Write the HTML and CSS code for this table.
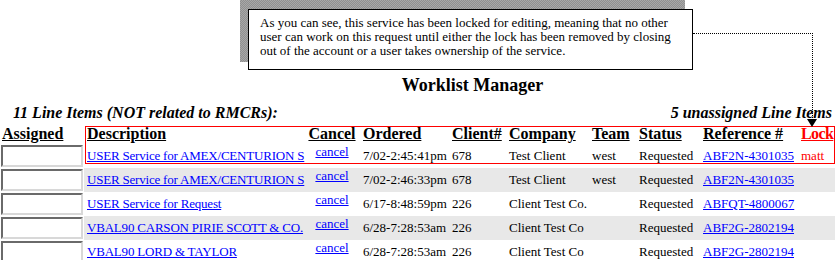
FILE: index.html
```html
<!DOCTYPE html>
<html>
<head>
    <meta charset="UTF-8">
    <title>Worklist Manager</title>
    <link rel="stylesheet" href="styles.css">
</head>
<body>
    <div class="page">
        <div class="note-shadow"></div>
        <div class="note">
            As you can see, this service has been locked for editing, meaning that no other<br>
            user can work on this request until either the lock has been removed by closing<br>
            out of the account or a user takes ownership of the service.
        </div>
        <div class="note-leader"></div>
        <div class="note-arrow"></div>

        <h1 class="title">Worklist Manager</h1>

        <div class="counts">
            <span>11 Line Items (NOT related to RMCRs):</span>
            <span>5 unassigned Line Items</span>
        </div>

        <div class="worklist-wrap">
            <table class="worklist">
                <colgroup>
                    <col class="c-assigned">
                    <col class="c-desc">
                    <col class="c-cancel">
                    <col class="c-ordered">
                    <col class="c-client">
                    <col class="c-company">
                    <col class="c-team">
                    <col class="c-status">
                    <col class="c-ref">
                    <col class="c-lock">
                </colgroup>
                <thead>
                    <tr>
                        <th class="assigned">Assigned</th>
                        <th>Description</th>
                        <th class="cancel">Cancel</th>
                        <th>Ordered</th>
                        <th>Client#</th>
                        <th>Company</th>
                        <th>Team</th>
                        <th>Status</th>
                        <th>Reference #</th>
                        <th class="lock">Lock</th>
                    </tr>
                </thead>
                <tbody>
                    <tr>
                        <td class="assigned"><input type="text"></td>
                        <td class="desc"><a href="#">USER Service for AMEX/CENTURION S</a></td>
                        <td class="cancel"><a href="#">cancel</a></td>
                        <td>7/02-2:45:41pm</td>
                        <td>678</td>
                        <td>Test Client</td>
                        <td>west</td>
                        <td>Requested</td>
                        <td><a href="#">ABF2N-4301035</a></td>
                        <td class="lock">matt</td>
                    </tr>
                    <tr class="alt">
                        <td class="assigned"><input type="text"></td>
                        <td class="desc"><a href="#">USER Service for AMEX/CENTURION S</a></td>
                        <td class="cancel"><a href="#">cancel</a></td>
                        <td>7/02-2:46:33pm</td>
                        <td>678</td>
                        <td>Test Client</td>
                        <td>west</td>
                        <td>Requested</td>
                        <td><a href="#">ABF2N-4301035</a></td>
                        <td class="lock"></td>
                    </tr>
                    <tr>
                        <td class="assigned"><input type="text"></td>
                        <td class="desc"><a href="#">USER Service for Request</a></td>
                        <td class="cancel"><a href="#">cancel</a></td>
                        <td>6/17-8:48:59pm</td>
                        <td>226</td>
                        <td>Client Test Co.</td>
                        <td></td>
                        <td>Requested</td>
                        <td><a href="#">ABFQT-4800067</a></td>
                        <td class="lock"></td>
                    </tr>
                    <tr class="alt">
                        <td class="assigned"><input type="text"></td>
                        <td class="desc"><a href="#">VBAL90 CARSON PIRIE SCOTT &amp; CO.</a></td>
                        <td class="cancel"><a href="#">cancel</a></td>
                        <td>6/28-7:28:53am</td>
                        <td>226</td>
                        <td>Client Test Co</td>
                        <td></td>
                        <td>Requested</td>
                        <td><a href="#">ABF2G-2802194</a></td>
                        <td class="lock"></td>
                    </tr>
                    <tr>
                        <td class="assigned"><input type="text"></td>
                        <td class="desc"><a href="#">VBAL90 LORD &amp; TAYLOR</a></td>
                        <td class="cancel"><a href="#">cancel</a></td>
                        <td>6/28-7:28:53am</td>
                        <td>226</td>
                        <td>Client Test Co</td>
                        <td></td>
                        <td>Requested</td>
                        <td><a href="#">ABF2G-2802194</a></td>
                        <td class="lock"></td>
                    </tr>
                </tbody>
            </table>
            <div class="lock-highlight"></div>
        </div>
    </div>
</body>
</html>
```

FILE: styles.css
```css
* {
    margin: 0;
    padding: 0;
    box-sizing: border-box;
}

body {
    background: #fff;
    color: #000;
    font-family: "Liberation Serif", "Times New Roman", serif;
}

.page {
    position: relative;
    width: 839px;
    height: 260px;
    overflow: hidden;
    padding-top: 74px;
}

/* callout note over the page */
.note-shadow {
    position: absolute;
    left: 240px;
    top: 0;
    width: 445px;
    height: 62px;
    background: repeating-conic-gradient(#909090 0 25%, #a8a8a8 0 50%) 0 0 / 2px 2px;
}

.note {
    position: absolute;
    left: 248px;
    top: 9px;
    width: 445px;
    height: 61px;
    padding: 6px 0 0 11px;
    background: #fff;
    border: 1px solid #000;
    font-size: 13px;
    line-height: 14px;
    white-space: nowrap;
}

.note-leader {
    position: absolute;
    left: 693px;
    top: 33px;
    width: 120px;
    height: 87px;
    border-top: 1px dotted #000;
    border-right: 1px dotted #000;
    z-index: 2;
}

.note-arrow {
    position: absolute;
    left: 807px;
    top: 119px;
    width: 0;
    height: 0;
    border-left: 5px solid transparent;
    border-right: 5px solid transparent;
    border-top: 8px solid #000;
    z-index: 2;
}

.title {
    padding-left: 106px;
    font-size: 18px;
    line-height: 22px;
    font-weight: bold;
    text-align: center;
}

.counts {
    display: flex;
    justify-content: space-between;
    margin-top: 8px;
    padding: 0 7px 0 13px;
    font-size: 16px;
    line-height: 18px;
    font-weight: bold;
    font-style: italic;
}

.worklist-wrap {
    position: relative;
    margin-top: 2px;
}

.worklist {
    width: 835px;
    table-layout: fixed;
    border-collapse: collapse;
    font-size: 13px;
}

.c-assigned { width: 84px; }
.c-desc { width: 220px; }
.c-cancel { width: 56px; }
.c-ordered { width: 89px; }
.c-client { width: 57px; }
.c-company { width: 83px; }
.c-team { width: 47px; }
.c-status { width: 64px; }
.c-ref { width: 98px; }
.c-lock { width: 37px; }

.worklist th {
    height: 20px;
    padding: 0 0 0 3px;
    font-size: 16px;
    line-height: 20px;
    text-align: left;
    text-decoration: underline;
    white-space: nowrap;
}

.worklist th.assigned {
    padding-left: 2px;
}

.worklist th.lock {
    letter-spacing: -0.6px;
}

.worklist th.cancel,
.worklist td.cancel {
    text-align: center;
    padding-left: 0;
}

.worklist td {
    height: 24px;
    padding: 0 0 0 3px;
    line-height: 16px;
    white-space: nowrap;
    vertical-align: middle;
}

.worklist td.desc {
    letter-spacing: -0.2px;
}

.worklist td.cancel {
    vertical-align: top;
    padding-top: 1px;
    line-height: 14px;
}

.worklist td.assigned {
    padding: 1px 0 0 1px;
    vertical-align: top;
}

.worklist tr.alt td {
    background: #e8e8e8;
}

.worklist tr.alt td.assigned {
    background: #fff;
}

.worklist a {
    color: #00f;
    text-decoration: underline;
}

.lock {
    color: #f00;
}

input[type="text"] {
    display: block;
    width: 82px;
    height: 22px;
    border-style: solid;
    border-width: 2px;
    border-color: #6a6a6a #d8d8d8 #d8d8d8 #6a6a6a;
    background: #fff;
}

.lock-highlight {
    position: absolute;
    left: 85px;
    top: 2px;
    width: 750px;
    height: 38px;
    border: 1px solid #f00;
    pointer-events: none;
}
```
